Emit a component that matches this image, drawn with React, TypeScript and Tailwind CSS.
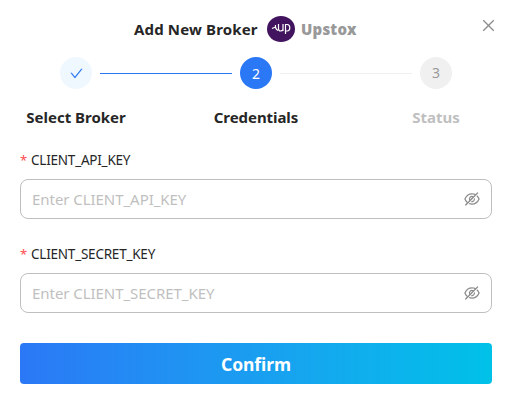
import type { ReactNode } from "react";
import { AiOutlineCheck, AiOutlineClose, AiOutlineEyeInvisible } from "react-icons/ai";

interface StepProps {
  label: string;
  circleClass: string;
  labelClass: string;
  children: ReactNode;
}

const Step = ({ label, circleClass, labelClass, children }: StepProps) => (
  <div className="flex w-8 flex-col items-center">
    <div className={`flex h-8 w-8 items-center justify-center rounded-full ${circleClass}`}>{children}</div>
    <span className={`mt-4 h-6 whitespace-nowrap text-[15px] font-bold leading-6 ${labelClass}`}>{label}</span>
  </div>
);

const SecretField = ({ name }: { name: string }) => (
  <div>
    <label className="flex h-[22px] items-center text-[13.5px] text-[#262626]">
      <span className="mr-1 w-[7px] text-[13px] leading-none text-[#ff4d4f]">*</span>
      <span className="tracking-[-0.22px]">{name}</span>
    </label>
    <div className="mt-2 flex h-10 items-center rounded-lg border border-[#bfbfbf] px-[11px]">
      <input
        type="password"
        placeholder={`Enter ${name}`}
        className="min-w-0 flex-1 bg-transparent text-[15px] tracking-[-0.05px] outline-none placeholder:text-[#bfbfbf]"
      />
      <AiOutlineEyeInvisible className="-mr-px h-[18px] w-[18px] text-[#8c8c8c]" />
    </div>
  </div>
);

const UpstoxLogo = () => (
  <svg viewBox="0 0 28 26" className="h-[26px] w-7" preserveAspectRatio="none">
    <ellipse cx="14" cy="13" rx="14" ry="13" fill="#42145f" />
    <g fill="none" stroke="#fff" strokeWidth="1.2">
      <path d="M5 12.5l3.5-1.5M8.5 9q-.5 4 2.5 5.5" />
      <path d="M11.5 8v4.5q0 2.5 2 2.5t2.5-1.5M16 8v7" />
      <path d="M18.5 18V8.5h1.7q2.6 0 2.6 3.2t-2.6 3.3h-1.7" />
    </g>
  </svg>
);

const App = () => {
  return (
    <div className="h-[402px] w-[512px] overflow-hidden bg-white px-5 pt-[13px] font-['Noto_Sans',sans-serif]">
      {/* Title */}
      <header className="relative flex h-8 items-center text-[15px] font-bold text-[#262626]">
        <h1 className="ml-[114px] w-[124px] whitespace-nowrap tracking-[0.15px]">Add New Broker</h1>
        <div className="ml-[9px]">
          <UpstoxLogo />
        </div>
        <span className="ml-[6px] font-black tracking-[0.2px] text-[#999]">Upstox</span>
        <button aria-label="Close" className="absolute right-[-4.5px] top-[3.5px] text-[#8c8c8c]">
          <AiOutlineClose className="h-[17px] w-[17px]" />
        </button>
      </header>

      {/* Steps */}
      <div className="mt-3 flex px-10">
        <Step label="Select Broker" circleClass="bg-[#f0f8ff] text-[#2b78f6]" labelClass="text-[#262626]">
          <AiOutlineCheck className="h-[15px] w-[15px]" />
        </Step>
        <div className="mx-2 mt-4 h-px flex-1 bg-[#2b78f6]" />
        <Step
          label="Credentials"
          circleClass="bg-[#2b78f6] pt-px text-sm text-white"
          labelClass="text-[#262626] tracking-[-0.07px]"
        >
          2
        </Step>
        <div className="mx-2 mt-4 h-px flex-1 bg-[#f0f0f0]" />
        <Step label="Status" circleClass="bg-[#f0f0f0] text-sm text-[#999]" labelClass="text-[#bfbfbf]">
          3
        </Step>
      </div>

      {/* Form */}
      <form className="mt-5">
        <div className="flex flex-col gap-6">
          <SecretField name="CLIENT_API_KEY" />
          <SecretField name="CLIENT_SECRET_KEY" />
        </div>
        <button
          type="button"
          className="mt-[30px] flex h-[41px] w-full items-center justify-center rounded bg-linear-to-r from-[#2b78f6] to-[#00c1e8] pt-0.5 text-[17.5px] font-bold tracking-[-0.05px] text-white"
        >
          Confirm
        </button>
      </form>
    </div>
  );
};

export default App;
